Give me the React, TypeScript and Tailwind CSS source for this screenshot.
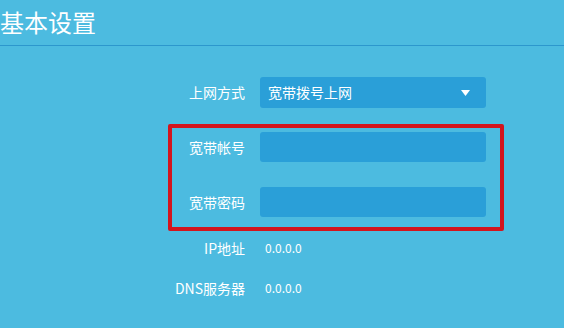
export default function App() {
  const font = { fontFamily: '"Noto Sans CJK SC", "Noto Sans", sans-serif' };
  return (
    <div className="w-[564px] h-[328px] overflow-hidden bg-[#4cbbe0] text-white" style={font}>
      {/* header */}
      <div className="h-[46px] border-b border-[#2c97cd] flex items-center">
        <h1 className="text-[24px] leading-none -mt-[2px]">基本设置</h1>
      </div>

      {/* connection type */}
      <div className="mt-[31px] flex items-center h-[31px]">
        <div className="w-[245px] text-right text-[14px]">上网方式</div>
        <div className="ml-[15px] w-[226px] h-[31px] rounded-[3px] bg-[#2a9fd8] flex items-center justify-between pl-[8px] pr-[16px]">
          <span className="text-[14px]">宽带拨号上网</span>
          <svg width="9" height="6" viewBox="0 0 9 6">
            <path d="M0 0H9L4.5 6Z" fill="#fff" />
          </svg>
        </div>
      </div>

      {/* highlighted pppoe fields */}
      <div className="mt-[16px] ml-[168px] w-[336px] border-4 border-[#d3141d] rounded-[2px] pt-[4px] pb-[10px] flex flex-col gap-[25px]">
        <div className="flex items-center h-[30px]">
          <div className="w-[73px] text-right text-[14px]">宽带帐号</div>
          <div className="ml-[15px] w-[226px] h-[30px] rounded-[3px] bg-[#2a9fd8]" />
        </div>
        <div className="flex items-center h-[30px]">
          <div className="w-[73px] text-right text-[14px]">宽带密码</div>
          <div className="ml-[15px] w-[226px] h-[30px] rounded-[3px] bg-[#2a9fd8]" />
        </div>
      </div>

      {/* status */}
      <div className="mt-[7px] flex items-center h-[20px]">
        <div className="w-[245px] text-right text-[14px]">IP地址</div>
        <div className="ml-[20px] text-[12px]">0.0.0.0</div>
      </div>
      <div className="mt-[20px] flex items-center h-[20px]">
        <div className="w-[245px] text-right text-[14px]">DNS服务器</div>
        <div className="ml-[20px] text-[12px]">0.0.0.0</div>
      </div>
    </div>
  );
}
